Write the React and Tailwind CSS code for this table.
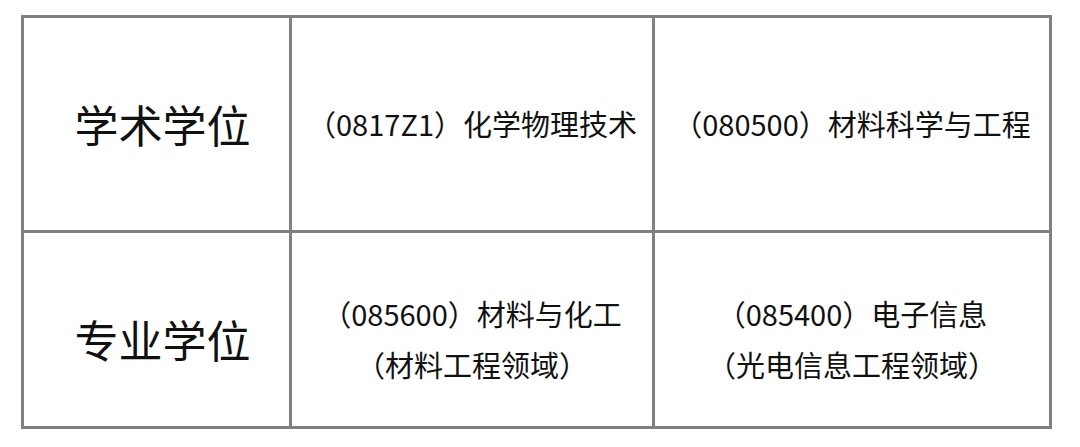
const cjk = { fontFamily: '"Noto Sans CJK SC", "Noto Sans", sans-serif' };

const Cell = ({ children, className = "" }) => (
  <div className={`bg-white flex flex-col items-center justify-center text-[#111] ${className}`}>
    {children}
  </div>
);

const App = () => {
  return (
    <div className="w-[1080px] h-[447px] bg-white pt-[15px] pl-[21px]" style={cjk}>
      <div className="grid grid-cols-[265px_360px_394px] grid-rows-[212px_193px] gap-[3px] p-[3px] bg-[#808080] w-[1031px]">
        <Cell className="text-[44px] pl-3">学术学位</Cell>
        <Cell className="text-[29px]">（0817Z1）化学物理技术</Cell>
        <Cell className="text-[29px]">（080500）材料科学与工程</Cell>

        <Cell className="text-[44px] pl-3 pt-[18px]">专业学位</Cell>
        <Cell className="text-[29px] leading-[51px] pt-[18px]">
          <span>（085600）材料与化工</span>
          <span>（材料工程领域）</span>
        </Cell>
        <Cell className="text-[29px] leading-[51px] pt-[18px]">
          <span>（085400）电子信息</span>
          <span>（光电信息工程领域）</span>
        </Cell>
      </div>
    </div>
  );
};

export default App;
